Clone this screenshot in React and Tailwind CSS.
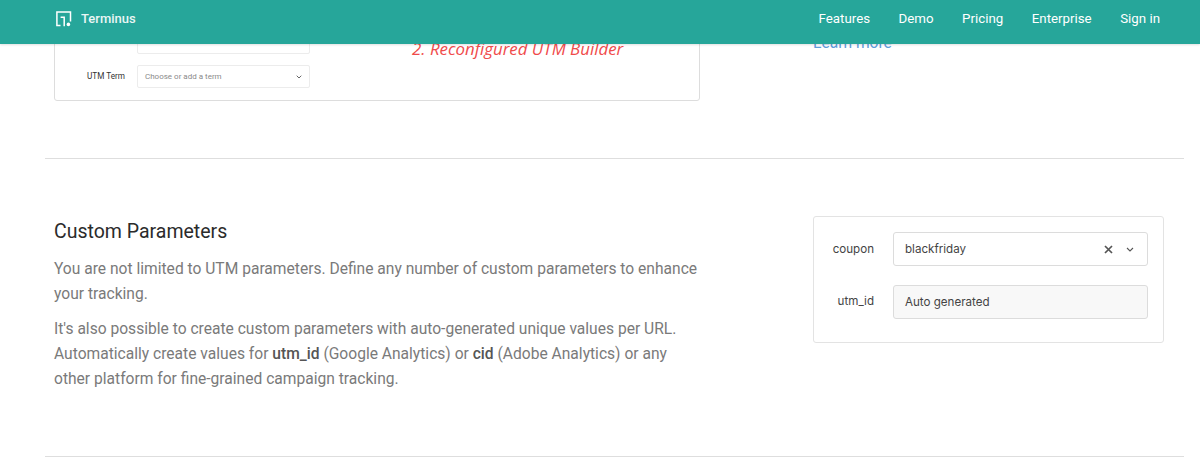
export default function App() {
  const logo = (
    <svg width="16" height="16" viewBox="0 0 16 16" fill="none" stroke="white" strokeWidth="1.5">
      <path d="M4.5 14.6H0.9V1h13.6v9.5" />
      <path d="M4.6 6.2H8.2V15.2" />
      <circle cx="12.4" cy="13.4" r="1.8" fill="white" stroke="none" />
    </svg>
  );
  return (
    <div className="h-[473px] w-[1200px] overflow-hidden bg-white font-['Roboto',sans-serif]">
      <header className="relative z-10 flex h-[44px] items-center justify-between bg-[#26a69a] pb-[6px] pl-[56px] pr-[40px] text-white shadow-[0_1px_2px_rgba(0,0,0,0.12)]">
        <div className="flex items-center gap-[9px]">
          {logo}
          <span className="text-[13px] font-medium opacity-90">Terminus</span>
        </div>
        <nav className="flex gap-[28.5px] text-[13.3px]">
          <span>Features</span>
          <span>Demo</span>
          <span>Pricing</span>
          <span>Enterprise</span>
          <span>Sign in</span>
        </nav>
      </header>

      <main className="pl-[45px] pr-[16px]">
        <section className="-mt-[44px] flex h-[159px] border-b border-[#dedede] pl-[9px]">
          <div className="relative h-[101px] w-[646px] shrink-0 rounded-b-[3px] border border-[#dddddd]">
            <div className="absolute left-[82px] top-[0px] h-[53px] w-[173px] rounded-[2px] border border-[#ececec]" />
            <div className="absolute left-[32px] top-[64px] flex h-[23px] items-center">
              <span className="w-[50px] text-[8.2px] text-[#333]">UTM Term</span>
              <div className="flex h-[23px] w-[173px] items-center justify-between rounded-[2px] border border-[#ececec] pl-[7px] pr-[7px] text-[8px] text-[#8a8a8a]">
                <span>Choose or add a term</span>
                <svg width="6" height="4" viewBox="0 0 6 4" fill="none" stroke="#666" strokeWidth="1">
                  <path d="M0.7 0.7 3 3l2.3-2.3" />
                </svg>
              </div>
            </div>
            <div className="absolute left-[357px] top-[35px] font-['Open_Sans',sans-serif] text-[16.85px] italic text-[#f04b4b]">
              2. Reconfigured UTM Builder
            </div>
          </div>
          <div className="ml-[113px] pt-[32px] text-[15.6px] text-[#5f9ddb]">Learn more</div>
        </section>

        <section className="flex h-[298px] border-b border-[#dedede] pl-[9px] pt-[57px]">
          <div className="w-[646px] shrink-0 text-[15.6px] leading-[25px] text-[#7a7a7a]">
            <h2 className="mb-[13px] mt-[3px] text-[19.5px] font-normal leading-[25px] text-[#2b2b2b]">Custom Parameters</h2>
            <p className="mb-[10px]">
              You are not limited to UTM parameters. Define any number of custom parameters to enhance your tracking.
            </p>
            <p>
              It's also possible to create custom parameters with auto-generated unique values per URL. Automatically create values for{" "}
              <b className="font-medium text-[#555]">utm_id</b> (Google Analytics) or <b className="font-medium text-[#555]">cid</b> (Adobe Analytics) or any other platform for fine-grained campaign tracking.
            </p>
          </div>
          <div className="ml-[113px] flex h-[127px] w-[351px] shrink-0 flex-col gap-[19px] self-start rounded-[3px] border border-[#e3e3e3] pl-[18px] pr-[15px] pt-[15px] font-['Inter',sans-serif] text-[11.6px] text-[#444]">
            <div className="flex items-center">
              <span className="w-[42px] pt-[1px] text-right">coupon</span>
              <div className="ml-[19px] flex h-[34px] flex-1 items-center justify-between rounded-[3px] border border-[#dcdcdc] pl-[11px] pr-[13px]">
                <span className="pt-[1px]">blackfriday</span>
                <div className="flex items-center gap-[13px]">
                  <svg width="9" height="9" viewBox="0 0 9 9" fill="none" stroke="#555" strokeWidth="1.7">
                    <path d="M1 1l7 7M8 1 1 8" />
                  </svg>
                  <svg width="8" height="5" viewBox="0 0 8 5" fill="none" stroke="#555" strokeWidth="1.1">
                    <path d="M1 1l3 3 3-3" />
                  </svg>
                </div>
              </div>
            </div>
            <div className="flex items-center">
              <span className="w-[42px] text-right">utm_id</span>
              <div className="ml-[19px] flex h-[34px] flex-1 items-center rounded-[3px] border border-[#dcdcdc] bg-[#f8f8f8] pl-[11px] pt-[2px]">
                Auto generated
              </div>
            </div>
          </div>
        </section>
      </main>
    </div>
  );
}
